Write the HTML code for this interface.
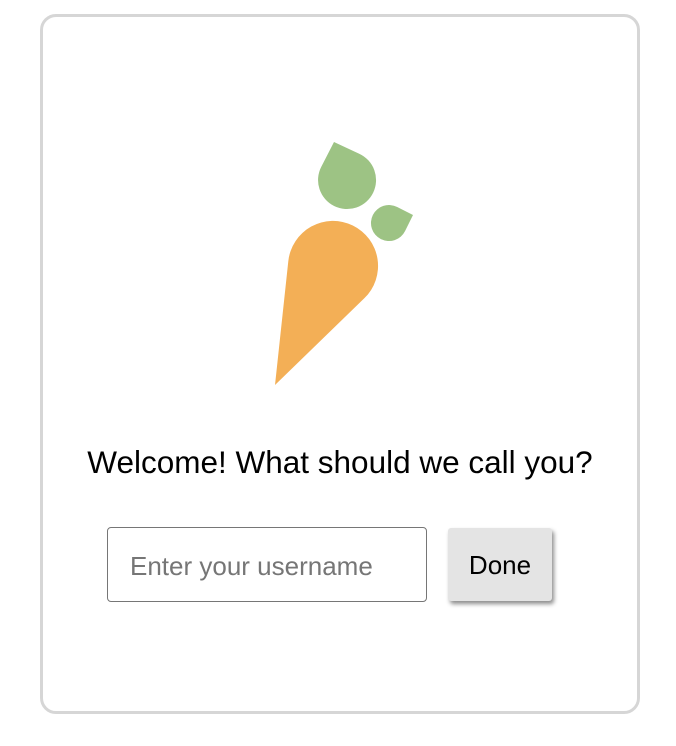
<!DOCTYPE html>
<html><head><meta charset="utf-8"><style>
html,body{margin:0;padding:0;background:#fff;width:676px;height:746px;overflow:hidden;font-family:"Liberation Sans",Arial,sans-serif}
.card{position:absolute;left:40px;top:14px;width:594px;height:694px;border:3px solid #d6d6d6;border-radius:16px;box-sizing:content-box}
.title{position:absolute;left:0;width:680px;top:443px;text-align:center;font-size:31.5px;color:#000;line-height:38px}
.input{position:absolute;left:107px;top:527px;width:320px;height:75px;border:1.5px solid #767676;border-radius:4px;box-sizing:border-box}
.ph{position:absolute;left:130px;top:551px;font-size:26px;color:#767676;line-height:30px}
.btn{position:absolute;left:448px;top:528px;width:104px;height:73px;background:#e4e4e4;border-radius:3px;box-shadow:2px 3px 4px rgba(0,0,0,.45);font-size:26px;line-height:74px;text-align:center;color:#000}
</style></head><body>
<div class="card"></div>
<svg width="676" height="746" style="position:absolute;left:0;top:0">
<path d="M334 142 L359.2 153.7 A29 29 0 1 1 321.3 166.7 Z" fill="#9dc384"/>
<path d="M413 215 L405.1 231 A18 18 0 1 1 397.2 207 Z" fill="#9dc384"/>
<path d="M275 385 L288.3 261.2 A45 45 0 1 1 364.3 298.3 Z" fill="#f3af56"/>
</svg>
<div class="title">Welcome! What should we call you?</div>
<div class="input"></div>
<div class="ph">Enter your username</div>
<div class="btn">Done</div>
</body></html>
